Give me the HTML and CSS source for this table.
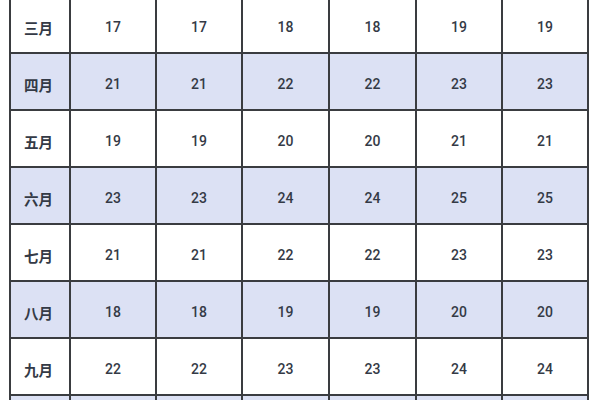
FILE: index.html
```html
<!DOCTYPE html>
<html lang="zh">
<head>
<meta charset="utf-8">
<link rel="stylesheet" href="styles.css">
</head>
<body>
<div class="grid">
  <div class="c m">三月</div><div class="c">17</div><div class="c">17</div><div class="c">18</div><div class="c">18</div><div class="c">19</div><div class="c">19</div>
  <div class="c m b">四月</div><div class="c b">21</div><div class="c b">21</div><div class="c b">22</div><div class="c b">22</div><div class="c b">23</div><div class="c b">23</div>
  <div class="c m">五月</div><div class="c">19</div><div class="c">19</div><div class="c">20</div><div class="c">20</div><div class="c">21</div><div class="c">21</div>
  <div class="c m b">六月</div><div class="c b">23</div><div class="c b">23</div><div class="c b">24</div><div class="c b">24</div><div class="c b">25</div><div class="c b">25</div>
  <div class="c m">七月</div><div class="c">21</div><div class="c">21</div><div class="c">22</div><div class="c">22</div><div class="c">23</div><div class="c">23</div>
  <div class="c m b">八月</div><div class="c b">18</div><div class="c b">18</div><div class="c b">19</div><div class="c b">19</div><div class="c b">20</div><div class="c b">20</div>
  <div class="c m">九月</div><div class="c">22</div><div class="c">22</div><div class="c">23</div><div class="c">23</div><div class="c">24</div><div class="c">24</div>
  <div class="c b"></div><div class="c b"></div><div class="c b"></div><div class="c b"></div><div class="c b"></div><div class="c b"></div><div class="c b"></div>
</div>
</body>
</html>
```
FILE: styles.css
```css
html, body {
  margin: 0;
  padding: 0;
  background: #ffffff;
  overflow: hidden;
}
body {
  width: 600px;
  height: 400px;
  font-family: "Roboto", "Noto Sans CJK SC", sans-serif;
}
.grid {
  display: grid;
  grid-template-columns: 58px 84px 84px 85px 85px 84px 84px;
  grid-auto-rows: 55px;
  gap: 2px;
  padding: 2px;
  background: #3a3c40;
  width: 576px;
  margin: -5px 0 0 9px;
}
.c {
  background: #ffffff;
  display: flex;
  align-items: center;
  justify-content: center;
  padding-top: 5px;
  box-sizing: border-box;
  font-size: 14px;
  font-weight: 500;
  color: #343a46;
}
.c.m {
  font-size: 14.5px;
  font-weight: 700;
  padding-left: 2px;
  justify-content: flex-start;
  padding-left: 13px;
}
.c.b {
  background: #dce1f4;
}
```
